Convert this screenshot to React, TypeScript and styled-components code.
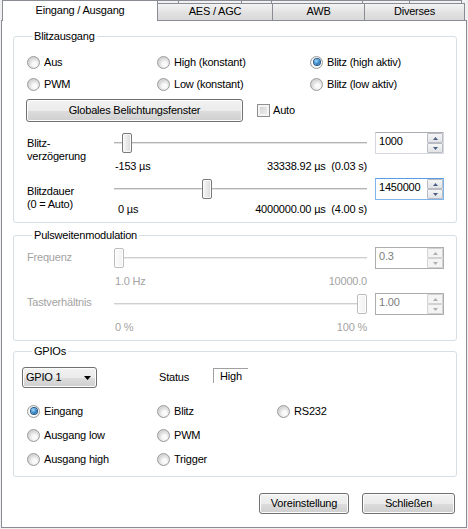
import type { ReactNode } from 'react'
import styled, { createGlobalStyle } from 'styled-components'

const GlobalStyle = createGlobalStyle`
  html, body {
    margin: 0;
    padding: 0;
    background: #f0f0f0;
  }
  * {
    box-sizing: border-box;
  }
`

const border = '#898c95'
const disabledText = '#a3a3a3'

const Window = styled.div`
  width: 468px;
  height: 529px;
  display: flex;
  flex-direction: column;
  font-family: 'Liberation Sans', Arial, sans-serif;
  font-size: 11px;
  line-height: 13px;
  letter-spacing: -0.2px;
  color: #000;
`

const TabHeader = styled.div`
  height: 20px;
  display: flex;
  flex-direction: column;
`

const BackRow = styled.div`
  height: 3px;
  display: flex;
  padding-left: 157px;
  overflow: hidden;
`

const BackTab = styled.div<{ $w: number }>`
  width: ${({ $w }) => $w}px;
  height: 20px;
  margin-left: -1px;
  border: 1px solid ${border};
  border-bottom: none;
  background: linear-gradient(#f3f3f3, #dcdcdc);
`

const FrontRow = styled.div`
  height: 17px;
  display: flex;
  padding-left: 2px;
`

const Tab = styled.div<{ $w: number; $active?: boolean }>`
  position: relative;
  z-index: ${({ $active }) => ($active ? 2 : 1)};
  width: ${({ $w }) => $w}px;
  height: ${({ $active }) => ($active ? 21 : 17)}px;
  margin-top: ${({ $active }) => ($active ? -3 : 0)}px;
  margin-left: ${({ $active }) => ($active ? 0 : -1)}px;
  padding-top: ${({ $active }) => ($active ? 3 : 1)}px;
  border: 1px solid ${border};
  border-bottom: none;
  background: ${({ $active }) => ($active ? '#fff' : 'linear-gradient(#f3f3f3, #e0e0e0 60%, #d9d9d9)')};
  text-align: center;
  white-space: nowrap;
  &:first-child {
    margin-left: 0;
  }
`

const Panel = styled.div`
  margin-left: 1px;
  width: 466px;
  height: 508px;
  border: 1px solid ${border};
  background: #fff;
  padding: 9px 9px 0 11px;
  display: flex;
  flex-direction: column;
`

const Group = styled.fieldset<{ $mt: number; $pb: number }>`
  margin: ${({ $mt }) => $mt}px 0 0;
  padding: 0 0 ${({ $pb }) => $pb}px 13px;
  border: 1px solid #d5dfe5;
  border-radius: 3px;
  min-width: 0;
`

const Legend = styled.legend`
  margin-left: 5px;
  padding: 0 2px;
  line-height: 13px;
`

const RadioGrid = styled.div<{ $cols: string; $row: number; $mt: number }>`
  display: grid;
  grid-template-columns: ${({ $cols }) => $cols};
  grid-auto-rows: ${({ $row }) => $row}px;
  margin-top: ${({ $mt }) => $mt}px;
`

const RadioLabel = styled.label`
  display: flex;
  align-items: center;
  gap: 4px;
  white-space: nowrap;
`

const RadioCircle = styled.span<{ $checked?: boolean }>`
  flex: none;
  width: 13px;
  height: 13px;
  border-radius: 50%;
  border: 1px solid #9a9b9b;
  background: ${({ $checked }) =>
    $checked
      ? 'radial-gradient(circle, #fff 0 4px, #e8e8e8 6px)'
      : 'radial-gradient(circle at 60% 65%, #fafafa 0 2px, #e8e8e8 4px, #d6d6d6 6px)'};
  display: flex;
  align-items: center;
  justify-content: center;

  &::after {
    content: '';
    display: ${({ $checked }) => ($checked ? 'block' : 'none')};
    width: 6px;
    height: 6px;
    border-radius: 50%;
    background: radial-gradient(circle at 40% 35%, #9fdcff, #2a7cc0 60%, #15497a);
    box-shadow: 0 0 0 1px #2a5a86;
  }
`

const ButtonRow = styled.div`
  display: flex;
  align-items: center;
  margin-top: 4px;
`

const Button = styled.button<{ $w: number; $h: number }>`
  width: ${({ $w }) => $w}px;
  height: ${({ $h }) => $h}px;
  padding: 0;
  border: 1px solid #707070;
  border-radius: 3px;
  background: linear-gradient(#f2f2f2 0%, #ebebeb 50%, #dddddd 51%, #cfcfcf 100%);
  box-shadow: inset 0 0 0 1px #fcfcfc;
  font: inherit;
  letter-spacing: inherit;
  color: #000;
`

const GlobalButton = styled(Button)`
  margin-left: -1px;
`

const CheckLabel = styled.label`
  display: flex;
  align-items: center;
  gap: 3px;
  margin-left: 14px;
`

const CheckBox = styled.span`
  width: 13px;
  height: 13px;
  border: 1px solid #8e8f8f;
  background: linear-gradient(135deg, #cbcbcb, #f6f6f6);
  box-shadow: inset 0 0 0 2px #f4f4f4;
`

const SliderBlock = styled.div<{ $mt: number }>`
  display: grid;
  grid-template-columns: 86px 262px 69px;
  grid-template-rows: 22px auto;
  margin-top: ${({ $mt }) => $mt}px;
`

const SliderLabel = styled.div<{ $top: number; $disabled?: boolean }>`
  grid-row: 1 / 3;
  padding-top: ${({ $top }) => $top}px;
  color: ${({ $disabled }) => ($disabled ? disabledText : '#000')};
`

const Slider = styled.div`
  position: relative;
  width: 255px;
  height: 22px;
`

const Track = styled.div<{ $disabled?: boolean }>`
  margin: 10px 1px 0;
  height: 2px;
  background: ${({ $disabled }) =>
    $disabled ? 'linear-gradient(#cfcfcf 50%, #ececec 50%)' : 'linear-gradient(#b3b3b3 50%, #e3e3e3 50%)'};
`

const Thumb = styled.div<{ $disabled?: boolean }>`
  position: absolute;
  top: 1px;
  width: 10px;
  height: 20px;
  border: 1px solid ${({ $disabled }) => ($disabled ? '#bcbcbc' : '#7a7a7a')};
  border-radius: 2px;
  background: ${({ $disabled }) =>
    $disabled ? 'linear-gradient(90deg, #fbfbfb, #f1f1f1)' : 'linear-gradient(90deg, #f7f7f7, #e6e6e6 60%, #d8d8d8)'};
  box-shadow: inset 0 0 0 1px ${({ $disabled }) => ($disabled ? '#fff' : '#fafafa')};
`

const Values = styled.div<{ $top: number; $left: number; $disabled?: boolean }>`
  grid-column: 2;
  width: 255px;
  display: flex;
  justify-content: space-between;
  padding: ${({ $top }) => $top}px 1px 0 ${({ $left }) => $left}px;
  white-space: pre;
  color: ${({ $disabled }) => ($disabled ? disabledText : '#000')};
`

const SpinBox = styled.div<{ $focused?: boolean; $disabled?: boolean }>`
  width: 69px;
  height: 22px;
  display: flex;
  border: 1px solid ${({ $focused, $disabled }) => ($focused ? '#7eb4ea' : $disabled ? '#adadad' : '#d5d8de')};
  border-top-color: ${({ $focused, $disabled }) => ($focused ? '#569de5' : $disabled ? '#adadad' : '#abadb3')};
  background: #fff;
`

const SpinText = styled.div<{ $disabled?: boolean }>`
  flex: 1;
  padding-left: 3px;
  line-height: 17px;
  color: ${({ $disabled }) => ($disabled ? '#7d7d7d' : '#000')};
`

const SpinButtons = styled.div`
  width: 16px;
  display: flex;
  flex-direction: column;
`

const SpinButton = styled.div<{ $disabled?: boolean }>`
  height: 10px;
  border: 1px solid ${({ $disabled }) => ($disabled ? '#d2d2d2' : '#b9bcc2')};
  border-radius: 1px;
  background: ${({ $disabled }) => ($disabled ? '#f4f4f4' : 'linear-gradient(#f5f5f5, #e1e3e6)')};
  display: flex;
  align-items: center;
  justify-content: center;
  color: ${({ $disabled }) => ($disabled ? '#b0b0b0' : '#4b5f80')};
`

const GpioTop = styled.div`
  display: grid;
  grid-template-columns: 132px 54px 35px;
  align-items: center;
  margin-top: 9px;
`

const Combo = styled.div`
  margin-left: -5px;
  width: 75px;
  height: 21px;
  display: flex;
  align-items: center;
  justify-content: space-between;
  padding: 0 5px 0 3px;
  border: 1px solid #707070;
  border-radius: 3px;
  background: linear-gradient(#f2f2f2 0%, #ebebeb 50%, #dddddd 51%, #cfcfcf 100%);
  box-shadow: inset 0 0 0 1px #fcfcfc;
`

const StatusBox = styled.div`
  align-self: start;
  margin-top: 1px;
  height: 15px;
  padding: 1px 0 0 6px;
  border-top: 1px solid #a0a0a0;
  border-left: 1px solid #a0a0a0;
`

const Footer = styled.div`
  display: flex;
  justify-content: flex-end;
  gap: 13px;
  margin-top: 16px;
  padding-right: 2px;
`

function Radio({ label, checked }: { label: string; checked?: boolean }) {
  return (
    <RadioLabel>
      <RadioCircle $checked={checked} />
      {label}
    </RadioLabel>
  )
}

function Arrow({ up }: { up?: boolean }) {
  return (
    <svg width="5" height="3" viewBox="0 0 5 3">
      <path d={up ? 'M0 3 L2.5 0 L5 3 Z' : 'M0 0 L5 0 L2.5 3 Z'} fill="currentColor" />
    </svg>
  )
}

function Spin({ value, focused, disabled }: { value: string; focused?: boolean; disabled?: boolean }) {
  return (
    <SpinBox $focused={focused} $disabled={disabled}>
      <SpinText $disabled={disabled}>{value}</SpinText>
      <SpinButtons>
        <SpinButton $disabled={disabled}>
          <Arrow up />
        </SpinButton>
        <SpinButton $disabled={disabled}>
          <Arrow />
        </SpinButton>
      </SpinButtons>
    </SpinBox>
  )
}

type SliderRowProps = {
  label: ReactNode
  mt: number
  labelTop: number
  thumb: number
  value: string
  min: string
  max: string
  valueTop: number
  minPad: number
  disabled?: boolean
  focused?: boolean
}

function SliderRow(p: SliderRowProps) {
  return (
    <SliderBlock $mt={p.mt}>
      <SliderLabel $top={p.labelTop} $disabled={p.disabled}>
        {p.label}
      </SliderLabel>
      <Slider>
        <Track $disabled={p.disabled} />
        <Thumb $disabled={p.disabled} style={{ left: p.thumb }} />
      </Slider>
      <Spin value={p.value} focused={p.focused} disabled={p.disabled} />
      <Values $top={p.valueTop} $left={p.minPad} $disabled={p.disabled}>
        <span>{p.min}</span>
        <span>{p.max}</span>
      </Values>
    </SliderBlock>
  )
}

export default function App() {
  return (
    <>
      <GlobalStyle />
      <Window>
        <TabHeader>
          <BackRow>
            {[23, 64, 31, 92, 48, 53].map((w, i) => (
              <BackTab key={i} $w={w} />
            ))}
          </BackRow>
          <FrontRow>
            <Tab $w={156} $active>
              Eingang / Ausgang
            </Tab>
            <Tab $w={116}>AES / AGC</Tab>
            <Tab $w={93}>AWB</Tab>
            <Tab $w={101}>Diverses</Tab>
          </FrontRow>
        </TabHeader>

        <Panel>
          <Group $mt={0} $pb={6}>
            <Legend>Blitzausgang</Legend>
            <RadioGrid $cols="130px 153px auto" $row={22} $mt={8}>
              <Radio label="Aus" />
              <Radio label="High (konstant)" />
              <Radio label="Blitz (high aktiv)" checked />
              <Radio label="PWM" />
              <Radio label="Low (konstant)" />
              <Radio label="Blitz (low aktiv)" />
            </RadioGrid>
            <ButtonRow>
              <GlobalButton $w={217} $h={23}>
                Globales Belichtungsfenster
              </GlobalButton>
              <CheckLabel>
                <CheckBox />
                Auto
              </CheckLabel>
            </ButtonRow>
            <SliderRow
              label={
                <>
                  Blitz-
                  <br />
                  verzögerung
                </>
              }
              mt={10}
              labelTop={5}
              thumb={9}
              value="1000"
              min="-153 µs"
              max="33338.92 µs  (0.03 s)"
              valueTop={6}
              minPad={2}
            />
            <SliderRow
              label={
                <>
                  Blitzdauer
                  <br />
                  (0 = Auto)
                </>
              }
              mt={5}
              labelTop={7}
              thumb={89}
              value="1450000"
              min="0 µs"
              max="4000000.00 µs  (4.00 s)"
              valueTop={3}
              minPad={5}
              focused
            />
          </Group>

          <Group $mt={6} $pb={6}>
            <Legend>Pulsweitenmodulation</Legend>
            <SliderRow
              label="Frequenz"
              mt={5}
              labelTop={4}
              thumb={1}
              value="0.3"
              min="1.0 Hz"
              max="10000.0"
              valueTop={6}
              minPad={2}
              disabled
            />
            <SliderRow
              label="Tastverhältnis"
              mt={5}
              labelTop={3}
              thumb={244}
              value="1.00"
              min="0 %"
              max="100 %"
              valueTop={6}
              minPad={2}
              disabled
            />
          </Group>

          <Group $mt={4} $pb={5}>
            <Legend>GPIOs</Legend>
            <GpioTop>
              <Combo>
                GPIO 1
                <svg width="7" height="4" viewBox="0 0 7 4">
                  <path d="M0 0 L7 0 L3.5 4 Z" fill="#000" />
                </svg>
              </Combo>
              <span>Status</span>
              <StatusBox>High</StatusBox>
            </GpioTop>
            <RadioGrid $cols="130px 120px auto" $row={24} $mt={11}>
              <Radio label="Eingang" checked />
              <Radio label="Blitz" />
              <Radio label="RS232" />
              <Radio label="Ausgang low" />
              <Radio label="PWM" />
              <span />
              <Radio label="Ausgang high" />
              <Radio label="Trigger" />
            </RadioGrid>
          </Group>

          <Footer>
            <Button $w={90} $h={21}>
              Voreinstellung
            </Button>
            <Button $w={93} $h={21}>
              Schließen
            </Button>
          </Footer>
        </Panel>
      </Window>
    </>
  )
}
